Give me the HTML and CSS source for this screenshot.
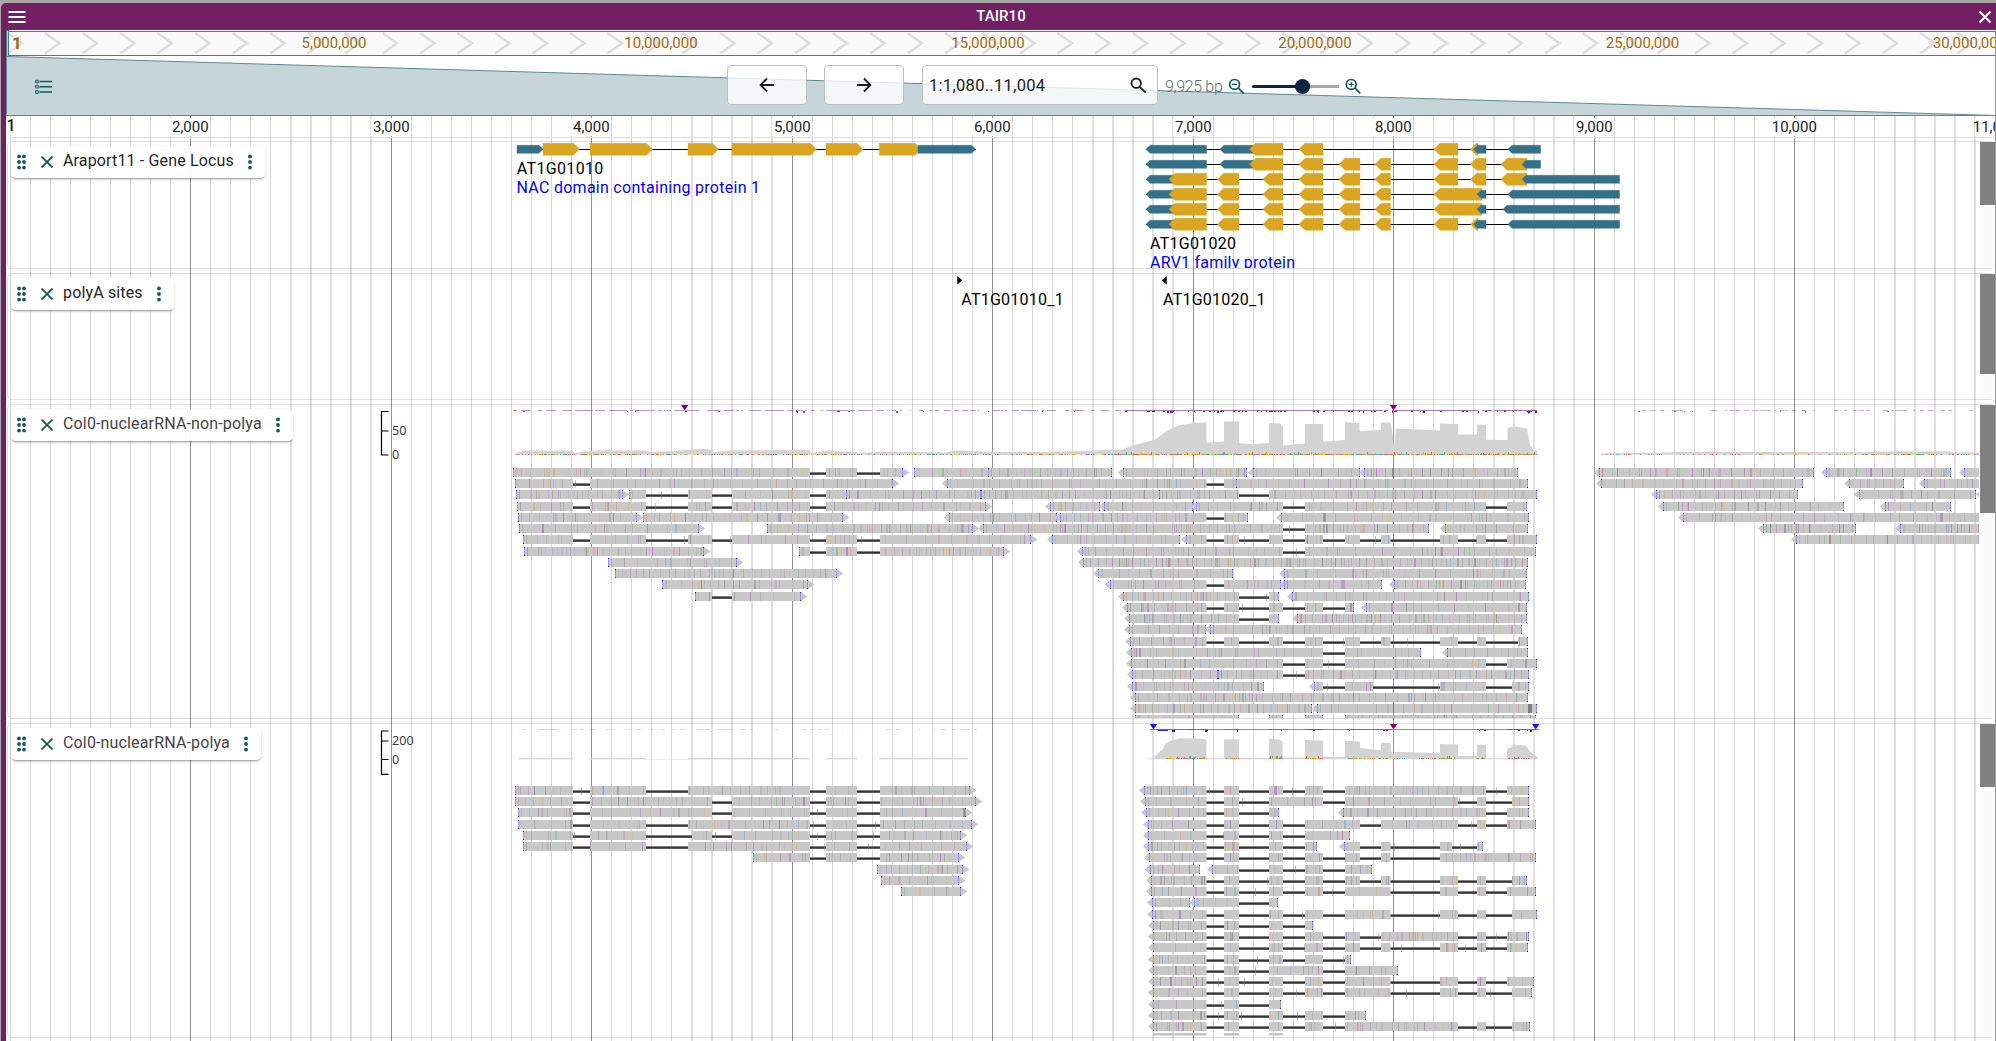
FILE: index.html
```html
<!DOCTYPE html>
<html lang="en">
<head>
<meta charset="utf-8">
<title>TAIR10</title>
<link rel="stylesheet" href="styles.css">
</head>
<body>
<div class="window">
  <header class="titlebar">
    <svg class="menu" width="18" height="14" viewBox="0 0 18 14"><path d="M.5 2h17M.5 7h17M.5 12h17" stroke="#fff" stroke-width="2"/></svg>
    <h1>TAIR10</h1>
    <svg class="close" width="14" height="14" viewBox="0 0 14 14"><path d="M1.5 1.5l11 11M12.5 1.5l-11 11" stroke="#fff" stroke-width="2"/></svg>
  </header>
  <main class="view">
    <svg class="grid" id="grid" width="1989" height="925" viewBox="7 116 1989 925"></svg>
    <svg class="overview" id="overview" width="1990" height="28" viewBox="6 30 1990 28"></svg>
    <section class="controls">
      <svg class="zoomfan" width="1990" height="60" viewBox="6 56 1990 60"><path d="M6.5 56.5L1996 115.5H6.5Z" fill="#c6d5d9" stroke="#5c8c91"/></svg>
      <svg class="list" width="18" height="16" viewBox="0 0 18 16" fill="none" stroke="#135560"><path stroke-width="1.4" d="M4.5 2.5H17M4.5 7.7H17M4.5 13H17"/><path d="M.7 1.2h2.6v2.6H.7zM.7 6.4h2.6V9H.7zM.7 11.7h2.6v2.6H.7z"/></svg>
      <button class="nav"><svg width="16" height="16" viewBox="0 0 16 16"><path d="M15 8H2M8 1.5L1.6 8 8 14.5" fill="none" stroke="#1c1c1c" stroke-width="1.8"/></svg></button>
      <button class="nav"><svg width="16" height="16" viewBox="0 0 16 16"><path d="M1 8h13M8 1.5L14.4 8 8 14.5" fill="none" stroke="#1c1c1c" stroke-width="1.8"/></svg></button>
      <div class="search"><span>1:1,080..11,004</span>
        <svg width="17" height="17" viewBox="0 0 17 17" fill="none" stroke="#222" stroke-width="1.9"><circle cx="6.2" cy="6.2" r="4.7"/><path d="M9.8 9.8l5.8 5.8"/></svg></div>
      <span class="bp">9,925 bp</span>
      <svg class="zoomer" width="134" height="18" viewBox="1228 78 134 18" fill="none" stroke="#135560" stroke-width="1.7"><circle cx="1234.6" cy="84.4" r="4.9"/><path d="M1238.3 88.2l5.4 5.2"/><path stroke-width="1.1" d="M1232 84.4h5"/><path d="M1304 86.5h35" stroke="#9ea8b8" stroke-width="3"/><path d="M1253.5 86.5h45" stroke="#0d233f" stroke-width="3" stroke-linecap="round"/><circle cx="1302.5" cy="86.5" r="7.6" fill="#0d233f" stroke="none"/><circle cx="1351.2" cy="84.4" r="4.9"/><path d="M1354.9 88.2l5.4 5.2"/><path stroke-width="1.1" d="M1348.7 84.4h5M1351.2 81.9v5"/></svg>
    </section>
    <svg class="ruler track" id="ruler" width="1989" height="22" viewBox="7 116 1989 22"></svg>
    <section class="track genes">
      <svg id="genes" width="1989" height="126" viewBox="7 142 1989 126"></svg>
      <div class="chip"><svg class="grip" width="9" height="16"><use href="#i-grip"/></svg><svg class="x" width="12" height="12"><use href="#i-x"/></svg><span>Araport11 - Gene Locus</span><svg class="more" width="4" height="16"><use href="#i-more"/></svg></div>
    </section>
    <section class="track sites">
      <svg id="sites" width="1989" height="125" viewBox="7 274 1989 125"></svg>
      <div class="chip"><svg class="grip" width="9" height="16"><use href="#i-grip"/></svg><svg class="x" width="12" height="12"><use href="#i-x"/></svg><span>polyA sites</span><svg class="more" width="4" height="16"><use href="#i-more"/></svg></div>
    </section>
    <section class="track reads">
      <svg id="nonpolya" width="1989" height="313" viewBox="7 405 1989 313"></svg>
      <div class="chip dim"><svg class="grip" width="9" height="16"><use href="#i-grip"/></svg><svg class="x" width="12" height="12"><use href="#i-x"/></svg><span>Col0-nuclearRNA-non-polya</span><svg class="more" width="4" height="16"><use href="#i-more"/></svg></div>
    </section>
    <section class="track reads">
      <svg id="polya" width="1989" height="313" viewBox="7 724 1989 313"></svg>
      <div class="chip dim"><svg class="grip" width="9" height="16"><use href="#i-grip"/></svg><svg class="x" width="12" height="12"><use href="#i-x"/></svg><span>Col0-nuclearRNA-polya</span><svg class="more" width="4" height="16"><use href="#i-more"/></svg></div>
    </section>
  </main>
</div>
<svg width="0" height="0" class="defs">
  <symbol id="i-grip" viewBox="0 0 9 16"><g fill="#135560"><circle cx="2" cy="2.4" r="1.9"/><circle cx="7" cy="2.4" r="1.9"/><circle cx="2" cy="8" r="1.9"/><circle cx="7" cy="8" r="1.9"/><circle cx="2" cy="13.6" r="1.9"/><circle cx="7" cy="13.6" r="1.9"/></g></symbol>
  <symbol id="i-x" viewBox="0 0 12 12"><path d="M.5 .5l11 11M11.5 .5l-11 11" stroke="#135560" stroke-width="1.7"/></symbol>
  <symbol id="i-more" viewBox="0 0 4 16"><g fill="#135560"><circle cx="2" cy="2.4" r="1.9"/><circle cx="2" cy="8" r="1.9"/><circle cx="2" cy="13.6" r="1.9"/></g></symbol>
</svg>
<script src="tracks.js"></script>
</body>
</html>
```
FILE: styles.css
```css
* { box-sizing: border-box; }
html, body { margin: 0; height: 100%; overflow: hidden; }
body { background: #aaa; font-family: Roboto, "Liberation Sans", sans-serif; padding: 3px 0 0 1px; }
svg { display: block; flex: none; }
.defs { position: absolute; }
.window { height: 1038px; width: 1995px; background: #721f63; border-radius: 5px 0 0 0; overflow: hidden; display: flex; flex-direction: column; }
.titlebar { height: 27px; flex: none; display: flex; align-items: center; justify-content: space-between; padding: 1px 4px 0 7px; color: #fff; }
.titlebar h1 { margin: -2px 2px 0 0; font-size: 15px; font-weight: 500; letter-spacing: .1px; }
.view { position: relative; margin-left: 5px; flex: 1; background: #fff; border-right: 1px solid #999; overflow: hidden; }
.overview { position: relative; }
.overview text { fill: #a3690c; font-size: 15px; }
.overview .ref { font-weight: 700; font-size: 17px; }
.grid { position: absolute; left: 1px; top: 86px; }
.controls { position: relative; height: 58px; display: flex; align-items: center; padding-left: 29px; }
.zoomfan { position: absolute; left: 0; top: -2px; }
.list { position: relative; margin-right: 674px; }
.nav { position: relative; width: 80px; height: 40px; margin: -4px 17px 0 0; padding: 0; display: flex; align-items: center; justify-content: center; background: rgba(255,255,255,.8); border: 1px solid #bcc0c1; border-radius: 4px; }
.nav + .nav { margin-right: 18px; }
.search { position: relative; width: 236px; height: 40px; margin: -4px 7px 0 0; display: flex; align-items: center; justify-content: space-between; padding: 0 10px 0 6px; background: rgba(255,255,255,.8); border: 1px solid #bcc0c1; border-radius: 4px; font-size: 16.5px; letter-spacing: .3px; color: #222; }
.bp { position: relative; width: 63px; font-size: 16px; font-weight: 300; letter-spacing: -.35px; white-space: nowrap; color: #666a6d; margin-top: -2px; }
.zoomer { position: relative; margin-top: -1px; }
.ruler text { font-size: 15px; fill: #222; }
.ruler .ref { font-weight: 500; font-size: 16px; }
.track { position: relative; margin-left: 1px; border: 1px solid rgba(0,0,0,.13); border-radius: 5px; width: 1988px; }
.track > svg { margin-left: -1px; }
.ruler.track { border: 0; width: 1989px; }
.genes { height: 128px; margin-top: 3px; }
.sites { height: 127px; margin-top: 4px; }
.reads { height: 315px; margin-top: 4px; }
.chip { position: absolute; left: 3px; top: 4px; height: 32px; display: inline-flex; align-items: center; padding: 0 13px 0 6px; border-radius: 5px; background: rgba(255,255,255,.94); box-shadow: 0 2px 2px -1px rgba(0,0,0,.35), 0 1px 4px rgba(0,0,0,.12); font-size: 16px; letter-spacing: .15px; color: #1f1f1f; white-space: nowrap; }
.chip.dim { color: #444; }
.chip .x { margin: 0 10px 0 15px; }
.chip span { margin-top: -3px; }
.chip .more { margin-left: 14px; }
.name { font-size: 16px; fill: #000; }
.desc { font-size: 16px; fill: #00f; }
.axis { font: 12.6px "Open Sans", sans-serif; fill: #333; }
```
FILE: tracks.js
```javascript
const $ = id => document.getElementById(id);
const rect = (x, y, w, h, fill, extra = '') => `<rect x="${x}" y="${y}" width="${w}" height="${h}" fill="${fill}" ${extra}/>`;
let seed = 7;
const rnd = () => (seed = (seed * 16807) % 2147483647) / 2147483647;
const pick = list => list[Math.floor(rnd() * list.length)];
const SCROLL_X = 1980;

// gridlines: one minor line each 100 bp, one major each 1,000 bp
const majors = [];
let g = '';
for (let n = -9; n < 90; n++) {
  const k = ((n % 20) + 20) % 20, x = 190 + 20 * n + Math.floor((n + 10) / 20);
  if (n % 10 === 0) { g += rect(x, 116, 1, 925, '#949494'); majors.push(x); }
  else if (n > 0 && k >= 5 && k <= 9) g += rect(x, 116, 2, 925, '#e0e0e0');
  else g += rect(x, 116, 1, 925, '#d8d8d8');
}
$('grid').innerHTML = g;

// whole-chromosome overview
let o = rect(6.5, 31.5, 1989, 24, '#fafafa', 'stroke="#9b6a10"');
for (let i = -1; i < 52; i++) {
  const x = 45 + 37.5 * i;
  o += `<path d="M${x} 33L${x + 14.5} 43.3L${x} 53.6" fill="none" stroke="#dcdcdc" stroke-width="2.4"/>`;
}
o += rect(6.5, 30.5, 2, 27, '#c6d5d9', 'stroke="#3f7f86"') + '<text class="ref" x="12" y="49">1</text>';
[334, 661, 988, 1315, 1642.5, 1969.5].forEach((x, i) => {
  o += `<text x="${x}" y="48" text-anchor="middle">${((i + 1) * 5e6).toLocaleString('en-US')}</text>`;
});
$('overview').innerHTML = o;

let r = '';
majors.concat(1995).forEach((x, i) => {
  const label = ((i + 2) * 1000).toLocaleString('en-US');
  r += rect(x - 20, 118, 40, 18, '#fff') + `<text x="${x + .3}" y="132" text-anchor="middle">${label}</text>`;
});
r += rect(7, 118, 8, 16, '#fff') + '<text class="ref" x="6.6" y="130.5">1</text>' + rect(7, 137, 1988, 1, '#dcdcdc');
$('ruler').innerHTML = r;

const scroll = (y, h) => rect(SCROLL_X, y - 1, 15, 900, '#fbfbfb') + rect(SCROLL_X, y, 15, h, '#808080');

// gene models
const CDS = '#daa520', UTR = '#357089';
function part(x1, x2, y, dir, kind) {
  const h = kind === 'C' ? 6 : 4, t = kind === 'C' ? 6 : 4, c = kind === 'C' ? CDS : UTR;
  const pts = dir > 0
    ? [[x1, -h], [x2 - t, -h], [x2, 0], [x2 - t, h], [x1, h]]
    : [[x2, -h], [x1 + t, -h], [x1, 0], [x1 + t, h], [x2, h]];
  return `<polygon points="${pts.map(p => p[0] + ',' + (y + p[1])).join(' ')}" fill="${c}" stroke="${c}" stroke-opacity=".55" stroke-width=".8"/>`;
}
function model(y, dir, parts) {
  const xs = parts.flatMap(p => [p[1], p[2]]);
  return rect(Math.min(...xs), Math.round(y - .5), Math.max(...xs) - Math.min(...xs), 1, '#000') +
    parts.map(p => part(p[1], p[2], y, dir, p[0])).join('');
}
const head = [['U', 1146, 1206.5], ['U', 1220, 1254], ['C', 1249.5, 1283]];
const body = [['U', 1146, 1175], ['C', 1169, 1206.5], ['C', 1217.5, 1239], ['C', 1263, 1283]];
const mid = [['C', 1299, 1323]], pair = [['C', 1339, 1360], ['C', 1375, 1390.5]];
const c8 = [['C', 1434, 1458]];
let gs = model(149.3, 1, [['U', 517, 543], ['C', 543, 579.5], ['C', 590, 652.5], ['C', 688, 718.5], ['C', 732, 816.5], ['C', 826, 863], ['C', 879.3, 921], ['U', 918, 975.5]]);
[
  [...head, ...mid, ...c8, ['C', 1470.5, 1478], ['U', 1473.5, 1486], ['U', 1508, 1540.5]],
  [...head, ...mid, ...pair, ...c8, ['C', 1470.5, 1486], ['C', 1501, 1527], ['U', 1522, 1540.5]],
  [...body, ...mid, ...pair, ...c8, ['C', 1470.5, 1486], ['C', 1501, 1527], ['U', 1522, 1619.5]],
  [...body, ...mid, ...pair, ['C', 1434, 1482], ['U', 1477, 1486], ['U', 1508, 1619.5]],
  [...body, ...mid, ...pair, ['C', 1434, 1482], ['U', 1477, 1486], ['U', 1503, 1619.5]],
  [...body, ...mid, ...pair, ...c8, ['C', 1470.5, 1478], ['U', 1473.5, 1486], ['U', 1508, 1619.5]]
].forEach((m, i) => { gs += model(149.3 + 15 * i, -1, m); });
gs += `<text class="name" x="516.8" y="173.5" textLength="86.5">AT1G01010</text><text class="desc" x="516.5" y="192.5" textLength="243.5">NAC domain containing protein 1</text>
<text class="name" x="1150" y="248.5" textLength="86">AT1G01020</text><text class="desc" x="1150" y="267.5" textLength="145">ARV1 family protein</text>`;
$('genes').innerHTML = gs + scroll(142, 63);

$('sites').innerHTML = `<path d="M957.3 276l5 4.3-5 4.3zM1166.7 276l-5 4.3 5 4.3z"/>
<text class="name" x="961.2" y="304.7" textLength="102.5">AT1G01010_1</text><text class="name" x="1163" y="304.7" textLength="102.5">AT1G01020_1</text>` + scroll(274, 100);

// introns by letter: p-t on the forward gene, a-h on the reverse gene
const INTRON = { p: [573, 590], q: [646, 688], r: [712, 732], s: [810, 826], t: [857, 880],
  a: [1206.5, 1224], b: [1239, 1269], c: [1283, 1305], d: [1323, 1345], e: [1360, 1381],
  f: [1390.5, 1440], g: [1458, 1477], h: [1486, 1507], H: [1486, 1512], Q: [646, 692],
  j: [1373, 1440], k: [1486, 1512], l: [1452, 1477], m: [1486, 1518] };
const TINT = ['#a66bb0', '#a66bb0', '#b48abb', '#7fae85', '#d98880', '#7fa9cf', '#d9b45c', '#8a8a8a', '#777', '#9c9c9c', '#a8a8a8', '#a8a8a8', '#a8a8a8'];
function read(x1, x2, dir, cuts, y) {
  const gaps = [...(cuts || '')].map(c => INTRON[c]);
  let s = '', x = x1;
  for (const [a, b] of [...gaps, [x2, x2]]) {
    s += rect(x, y, a - x, 9, '#c8c8c8');
    if (b > a) {
      s += rect(a, y + 4.4, b - a, 2.4, '#333');
      if (rnd() < .3) s += rect(Math.round(a + rnd() * (b - a)), y + 1, 1, 8, '#888', 'opacity=".5"');
    }
    x = b;
  }
  if (dir > 0) s += `<path d="M${x2} ${y}l6.5 4.5-6.5 4.5z" fill="#c8c8c8"/>`;
  if (dir < 0) s += `<path d="M${x1} ${y}l-5 4.5 5 4.5z" fill="#c8c8c8"/>`;
  const density = 3.8 + rnd() * 6.5;
  for (let m = x1 + 3; m < x2 - 3; m += .8 + rnd() * 2 * density) {
    if (gaps.some(v => m > v[0] - 2 && m < v[1])) continue;
    s += rect(Math.round(m), y, rnd() < .1 ? 2 : 1, 9, pick(TINT), `opacity="${(.22 + rnd() * .45).toFixed(2)}"`);
  }
  for (const e of [x1, x2 - 1]) s += `<path d="M${Math.round(e) + .5} ${y}v9" stroke="#66f" opacity=".55"/>` + rect(Math.round(e), y, 1, 1, '#22f') + rect(Math.round(e), y + 8, 1, 1, '#22f');
  return s;
}
const rows = (top, data) => data.map((row, i) => row.map(v => read(v[0], v[1], v[2], v[3], top + Math.round(11.24 * i))).join('')).join('');

const SPECK = ['#e8502e', '#4caf50', '#f5b400', '#2f9fd8', '#e8502e', '#f28c28'];
function specks(x1, x2, y, p, tall) {
  let s = '';
  for (let x = x1; x < x2; x++) if (rnd() < p) {
    const h = tall && rnd() < .16 ? 2 + Math.floor(rnd() * 2) : 1;
    s += rect(x, y + 1 - h, 1, h, pick(SPECK), 'opacity=".85"');
  }
  return s;
}
function dashes(x1, x2, y, p, op, deep) {
  let s = '';
  for (let x = x1; x < x2;) {
    const w = 1 + Math.floor(rnd() * 4);
    if (rnd() < p) s += rect(x, y, w, 1, pick(['#a04fb0', '#8b3a9b', '#6a5cf0', '#a04fb0']), `opacity="${op}"`);
    if (rnd() < deep) s += rect(x, y + 1, 1 + Math.floor(rnd() * 2), 1 + (rnd() < .2 ? 1 : 0), rnd() < .25 ? '#22f' : '#800080', `opacity="${Math.min(1, op + .2)}"`);
    x += w;
  }
  return s;
}
const marker = (x, y, c) => `<path d="M${x - 3.7} ${y}h7.4l-3.7 5.5z" fill="${c}"/>`;
const area = (pts, base) => `<polygon points="${pts[0][0]},${base} ${pts.map(p => p.join()).join(' ')} ${pts[pts.length - 1][0]},${base}" fill="#d3d3d3"/>`;
function axis(y1, y2, ticks) {
  let s = `<path d="M388.5 ${y1}H381.5V${y2}H388.5${ticks.map(t => `M381.5 ${t[0]}h7`).join('')}" fill="none" stroke="#000" stroke-width="1.2"/>`;
  ticks.forEach(t => { s += `<text class="axis" x="392" y="${t[0] + 4.3}">${t[1]}</text>`; });
  return s;
}
const clip = (id, y) => `<clipPath id="${id}">${rect(7, y, 1972, 313, '#000')}</clipPath><g clip-path="url(#${id})">`;

// non-polyadenylated library
let a = clip('cn', 405);
a += area([[514, 454], [518, 452.5], [526, 450.5], [573, 450.7], [574, 453], [590, 451], [600, 450.5], [646, 450.6], [650, 452], [688, 450], [700, 448.8], [712, 449.8], [713, 452], [732, 450.5], [810, 449.8], [811, 453.5], [826, 450.5], [857, 452], [858, 453.5], [880, 451.5], [945, 452.5], [955, 450.5], [1000, 452], [1050, 452], [1089, 450.7], [1123, 449.5], [1132, 445.5], [1146, 442], [1154, 440], [1161, 435.5], [1168, 430], [1179, 425.2], [1188, 424], [1195, 423], [1206.5, 422.5],
  [1206.5, 442.5], [1224, 441.5], [1224, 421.5], [1239, 421.3], [1239, 443], [1252, 444.3], [1269, 443], [1269, 423], [1280, 423.5], [1283, 427], [1283, 445.5], [1305, 443.5], [1305, 424], [1323, 424], [1323, 441.8], [1345, 440], [1345, 422.3], [1359.5, 423], [1359.5, 431], [1381, 430], [1381, 422.3], [1391, 423], [1394, 446], [1396, 428.6], [1440, 430.4], [1440, 423.6], [1458, 424], [1458, 434.5], [1477, 434.5], [1477, 424.3], [1486, 425], [1486, 439.7], [1507.5, 440], [1507.5, 428], [1515, 426.5], [1527, 428.5], [1530, 445], [1533, 449.5], [1537, 451]], 454.7);
a += area([[1601, 453.3], [1660, 452.8], [1690, 451.8], [1860, 452.2], [1895, 451.3], [1950, 451.3], [1955, 452.5], [1979, 452.5]], 454.7);
a += specks(516, 850, 454, .6) + specks(850, 880, 454, .3) + specks(880, 1110, 454, .45) + specks(1110, 1537, 454, .9, true) + specks(1603, 1860, 454, .22) + specks(1860, 1979, 454, .5);
a += dashes(513, 1125, 410, .62, .6, .07) + dashes(1125, 1537, 410, .95, .8, .35) + dashes(1600, 1635, 410, .2, .5, 0) + dashes(1635, 1979, 410, .45, .45, .05);
a += marker(684.7, 405, '#800080') + marker(1393.5, 405, '#800080') + '<path d="M1526.5 411h4.5l-2.2 3z" fill="#22f"/>';
a += rows(468, [
  [[513, 903, 1, 'st'], [914, 989, 0], [988, 1112, 0], [1123, 1247, -1], [1253, 1360, -1], [1364, 1518, -1], [1599, 1814, -1], [1826, 1951, -1], [1964, 1990, -1]],
  [[515, 893, 1, 'p'], [947, 1237, -1, 'a'], [1236, 1528, 0], [1601, 1803, -1], [1849, 1904, -1], [1924, 1990, -1]],
  [[516, 623, 1], [629, 848, 0, 'qrs'], [846, 981, 0], [981, 1160, 0], [1159, 1537, 0, 'b'], [1656, 1798, -1], [1859, 1976, -1], [1981, 1990, -1]],
  [[517, 986, 1, 'pqrs'], [1050, 1100, -1], [1104, 1193, -1], [1196, 1527, -1, 'ch'], [1663, 1844, -1], [1885, 1951, -1]],
  [[518, 637, 1], [643, 843, 1], [949, 1057, -1], [1060, 1248, -1, 'a'], [1281, 1529, -1], [1683, 1990, -1]],
  [[519, 699, 1], [767, 973, 1], [983, 1429, -1, 'c'], [1445, 1528, -1], [1763, 1856, -1], [1900, 1990, -1]],
  [[523, 1031, 1, 'pqrst'], [1052, 1180, -1], [1186, 1537, -1, 'abcdefgh'], [1796, 1990, -1]],
  [[524, 704, 1], [799, 1004, 1, 'st'], [1082, 1536, -1, 'c']],
  [[608, 737, 1], [1083, 1528, -1]],
  [[615, 837, 1], [1098, 1233, -1], [1284, 1527, -1]],
  [[662, 808, 1], [1110, 1281, -1, 'a'], [1284, 1382, -1], [1394, 1526, -1]],
  [[695, 801, 1, 'r'], [1123, 1279, -1, 'b'], [1292, 1529, -1]],
  [[1127, 1354, -1, 'abcd'], [1366, 1527, -1]],
  [[1129, 1279, -1, 'b'], [1297, 1527, -1]],
  [[1129, 1206, -1], [1210, 1522, -1]],
  [[1130, 1528, -1, 'abcdefgm']],
  [[1131, 1421, -1, 'd'], [1447, 1528, -1]],
  [[1131, 1537, -1, 'cdh']],
  [[1132, 1218, -1], [1218, 1529, 0, 'c']],
  [[1132, 1264, -1], [1314, 1529, -1, 'djk']],
  [[1135, 1528, -1]],
  [[1135, 1312, -1], [1317, 1537, -1]],
  [[1135, 1239, 0], [1269, 1283, 0], [1305, 1323, 0], [1345, 1536, 0]]
]);
a += rect(1393, 468, 1, 9, '#777') + rect(1393, 704, 1, 9, '#777') + rect(1528, 704, 4, 9, '#808080') + '</g>';
$('nonpolya').innerHTML = a + axis(411.5, 455, [[431, '50'], [455, '0']]) + scroll(405, 108);

// polyadenylated library
let b = clip('cp', 724);
for (const [x1, x2] of [[519, 573], [590, 646], [688, 810], [826, 857], [879, 968]]) b += rect(x1, 758, x2 - x1, 1.4, '#d6d9d3');
b += rect(646, 759, 42, .6, '#ddd') + dashes(516, 650, 729, .4, .25, 0) + dashes(650, 975, 729, .3, .25, 0);
b += area([[1147, 759], [1153, 758], [1160, 751.7], [1163, 749], [1165, 744.5], [1170, 741], [1179, 738.3], [1200, 738.5], [1206.5, 739.5], [1206.5, 758.3], [1224, 758.3], [1224, 739.5], [1239, 739.3], [1239, 758], [1269, 758], [1269, 738.7], [1279, 739.5], [1282.7, 742], [1282.7, 757.5], [1305, 757.5], [1305, 740], [1323, 740.5], [1323, 757], [1345, 757], [1345, 740.7], [1360, 741.5], [1360, 748], [1381, 750.3], [1381, 742.5], [1390.5, 743], [1391, 751], [1394, 755], [1395, 751.8], [1440, 753.3], [1440, 744], [1458, 744.5], [1458, 756], [1477, 756], [1477, 744.5], [1486, 745], [1486, 758.3], [1507, 758.3], [1507, 748.3], [1511, 748], [1512, 744.7], [1526, 745.5], [1530, 751.7], [1537, 756.5], [1538, 758]], 759.3);
for (const [x1, x2] of [[1166, 1207], [1225, 1239], [1269, 1283], [1305, 1323], [1347, 1360], [1440, 1455], [1477, 1486], [1508, 1530]]) b += specks(x1, x2, 758, .85, true);
b += specks(1360, 1440, 758, .4);
b += rect(1150, 729, 386, 1, '#a879b8');
for (const [x1, x2] of [[1150, 1207], [1224, 1239], [1269, 1283], [1305, 1323], [1345, 1390], [1477, 1486], [1507, 1536]]) b += dashes(x1, x2, 729, 1, .9, .3);
b += rect(1158, 730, 10, 1, '#22f') + marker(1153.5, 724, '#1414ff') + marker(1393.5, 724, '#800080') + marker(1535.7, 724, '#1414ff');
b += rows(786, [
  [[515, 970, 1, 'pqst'], [1144, 1529, -1, 'abcdh']],
  [[515, 976, 1, 'prst'], [1145, 1529, -1, 'abdgH']],
  [[518, 966, 1, 'prst'], [1146, 1279, -1, 'ab'], [1343, 1529, -1, 'h']],
  [[518, 972, 1, 'pqst'], [1148, 1536, -1, 'abcegh']],
  [[523, 961, 1, 'pQrst'], [1148, 1350, -1, 'abc']],
  [[523, 967, 1, 'pqst'], [1148, 1317, -1, 'abc'], [1344, 1483, -1, 'efl']],
  [[753, 959, 1, 'st'], [1149, 1536, -1, 'abcdef']],
  [[877, 963, 1], [1150, 1200, -1], [1212, 1372, -1, 'bcd']],
  [[881, 959, 1], [1151, 1527, -1, 'abcdefgH']],
  [[901, 961, 1], [1151, 1536, -1, 'abcdfgh']],
  [[1152, 1190, -1], [1194, 1278, -1, 'b']],
  [[1152, 1537, -1, 'abcdfgH']],
  [[1153, 1313, -1, 'abc']],
  [[1153, 1529, -1, 'abcdegh']],
  [[1153, 1528, -1, 'abcdefgh']],
  [[1153, 1351, -1, 'abcd']],
  [[1153, 1398, -1, 'abd']],
  [[1153, 1534, -1, 'abcdfgh']],
  [[1153, 1532, -1, 'abcdfgH']],
  [[1153, 1281, -1, 'ab']],
  [[1153, 1366, -1, 'abcd']],
  [[1153, 1530, -1, 'abcdgH']]
]);
for (const [x1, x2] of [[1153, 1206.5], [1224, 1239], [1269, 1283]]) b += rect(x1, 1033, x2 - x1, 2.5, '#c4c4c4');
b += '</g>';
$('polya').innerHTML = b + axis(731, 774.3, [[741, '200'], [759.5, '0']]) + scroll(724, 63);
```
